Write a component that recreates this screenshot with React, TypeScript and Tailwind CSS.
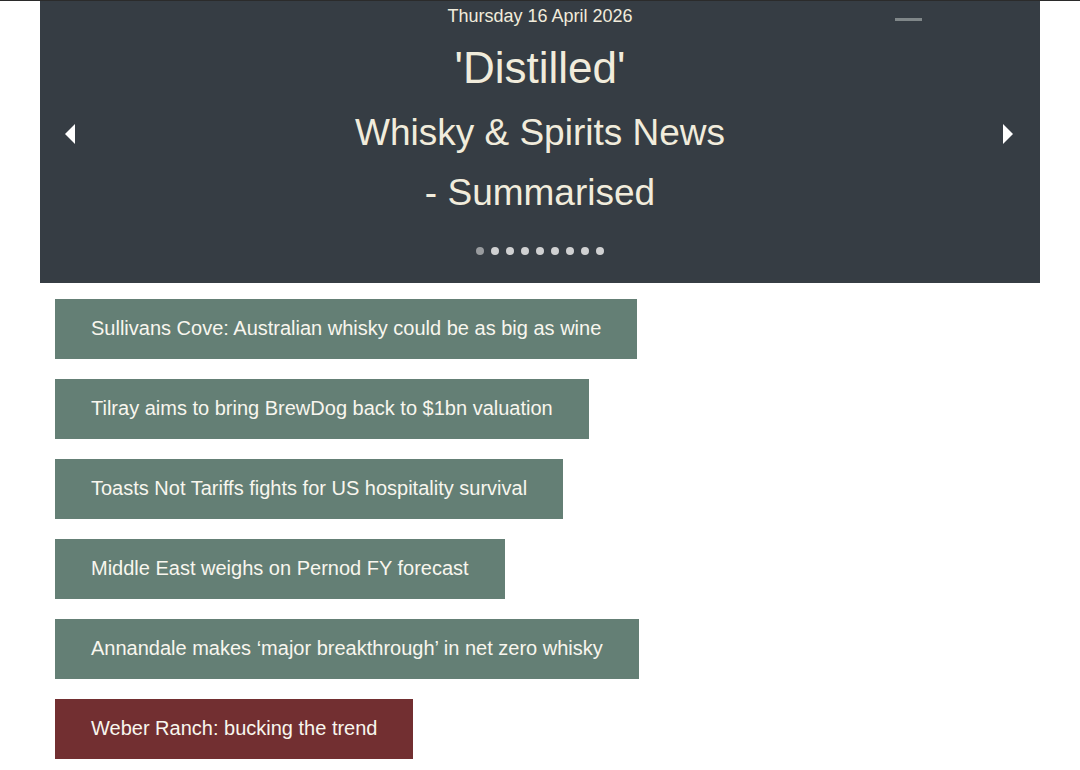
import { useState } from 'react';

const headlines = [
  { title: 'Sullivans Cove: Australian whisky could be as big as wine' },
  { title: 'Tilray aims to bring BrewDog back to $1bn valuation' },
  { title: 'Toasts Not Tariffs fights for US hospitality survival' },
  { title: 'Middle East weighs on Pernod FY forecast' },
  { title: 'Annandale makes \u2018major breakthrough\u2019 in net zero whisky' },
  { title: 'Weber Ranch: bucking the trend', featured: true },
];

const SLIDE_COUNT = 9;

export default function App() {
  const [slide, setSlide] = useState(0);

  const prev = () => setSlide(s => (s + SLIDE_COUNT - 1) % SLIDE_COUNT);
  const next = () => setSlide(s => (s + 1) % SLIDE_COUNT);

  return (
    <div
      className="min-h-[770px] bg-white border-t border-[#2b2b2b]"
      style={{ fontFamily: '"Liberation Sans", Arial, sans-serif' }}
    >
      {/* Banner carousel */}
      <div className="relative mx-[40px] h-[282px] bg-[#363d44] text-[#f1ecdc]">
        <div className="flex flex-col items-center">
          <p className="mt-[3px] text-[18px] leading-[24px]">Thursday 16 April 2026</p>
          <h1 className="mt-[15px] text-[44px] leading-[50px]">'Distilled'</h1>
          <h2 className="mt-[16px] text-[37px] leading-[48px]">Whisky &amp; Spirits News</h2>
          <h2 className="mt-[12px] text-[37px] leading-[48px]">- Summarised</h2>
          <div className="mt-[30px] flex gap-[7px]">
            {Array.from({ length: SLIDE_COUNT }).map((_, i) => (
              <button
                key={i}
                onClick={() => setSlide(i)}
                aria-label={`Slide ${i + 1}`}
                className={`h-[8px] w-[8px] rounded-full ${
                  i === slide ? 'bg-[#999c9f]' : 'bg-[#d0d1d2]'
                }`}
              />
            ))}
          </div>
        </div>

        {/* Collapse handle */}
        <div className="absolute left-[855px] top-[17px] h-[3px] w-[27px] bg-[#808789]" />

        <button
          onClick={prev}
          aria-label="Previous"
          className="absolute left-[24px] top-[122px] h-[22px] w-[12px]"
        >
          <svg width="12" height="22" viewBox="0 0 12 22">
            <polygon points="11,1 1,11 11,21" fill="#ffffff" />
          </svg>
        </button>
        <button
          onClick={next}
          aria-label="Next"
          className="absolute left-[962px] top-[122px] h-[22px] w-[12px]"
        >
          <svg width="12" height="22" viewBox="0 0 12 22">
            <polygon points="1,1 11,11 1,21" fill="#ffffff" />
          </svg>
        </button>
      </div>

      {/* Headline list */}
      <div className="mt-[16px] ml-[55px] flex flex-col items-start gap-[20px]">
        {headlines.map(item => (
          <a
            key={item.title}
            href="#"
            className={`flex h-[60px] items-center px-[36px] pb-[2px] text-[20px] text-[#f8f6ee] ${
              item.featured ? 'bg-[#722f31]' : 'bg-[#647f75]'
            }`}
          >
            {item.title}
          </a>
        ))}
      </div>
    </div>
  );
}
